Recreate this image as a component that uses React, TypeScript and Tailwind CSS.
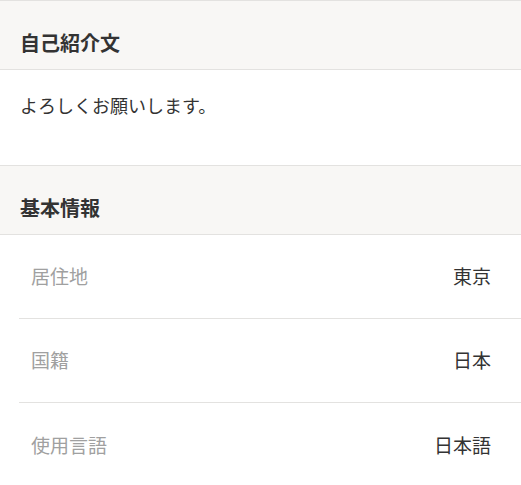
import React from "react";

const font = { fontFamily: '"Noto Sans CJK JP", "Noto Sans", sans-serif' };

function Header({ title }: { title: string }) {
  return (
    <div className="bg-[#f8f7f5] border-b border-[#e3e2e0] pl-5 pr-5 pt-[28px] pb-[12px]">
      <h2 className="text-[20px] leading-[28px] font-bold text-[#333333]">{title}</h2>
    </div>
  );
}

const rows = [
  { label: "居住地", value: "東京" },
  { label: "国籍", value: "日本" },
  { label: "使用言語", value: "日本語" },
];

export default function App() {
  return (
    <div className="w-[521px] h-[485px] overflow-hidden bg-white" style={font}>
      <div className="border-t border-[#e3e2e0]">
        <Header title="自己紹介文" />
        <div className="h-[96px] border-b border-[#e3e2e0] pl-5 pt-[23px]">
          <p className="text-[18px] leading-[24px] text-[#333333]">よろしくお願いします。</p>
        </div>
        <Header title="基本情報" />
        <div className="ml-[19px]">
          {rows.map((r, i) => (
            <div
              key={r.label}
              className={`h-[84px] flex items-center justify-between pl-[12px] pr-[30px] ${
                i < rows.length - 1 ? "border-b border-[#e3e2e0]" : ""
              }`}
            >
              <span className="text-[19px] text-[#a0a0a0]">{r.label}</span>
              <span className="text-[19px] text-[#333333]">{r.value}</span>
            </div>
          ))}
        </div>
      </div>
    </div>
  );
}
